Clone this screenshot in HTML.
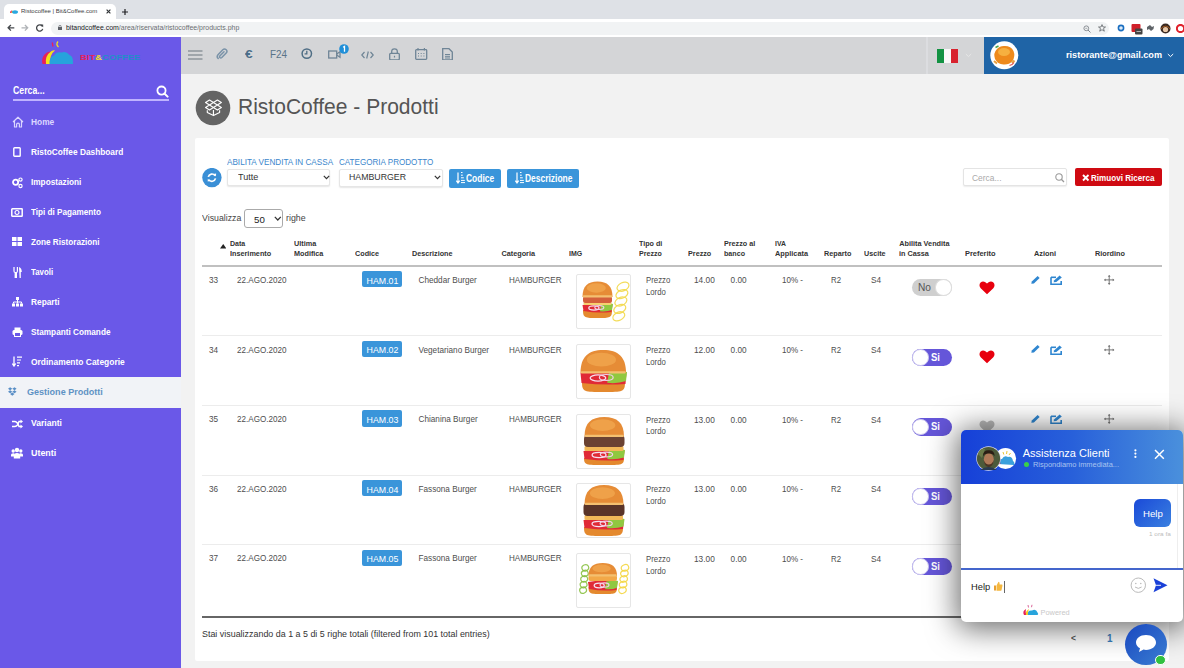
<!DOCTYPE html><html><head><meta charset='utf-8'><style>
*{margin:0;padding:0;box-sizing:border-box}
html,body{width:1184px;height:668px;overflow:hidden;background:#f2f2f2;font-family:'Liberation Sans',sans-serif}
.t{position:absolute;line-height:1;white-space:nowrap;transform-origin:0 0}
</style></head><body>
<div style="position:absolute;left:0px;top:0px;width:1184px;height:19px;background:#dee1e6"></div>
<div style="position:absolute;left:0px;top:18.6px;width:1184px;height:18px;background:#ffffff"></div>
<div style="position:absolute;left:3.5px;top:3.8px;width:112px;height:15.2px;background:#fff;border-radius:5px 5px 0 0"></div>
<svg style="position:absolute;left:8.5px;top:9px;" width="9" height="5" viewBox="0 0 9 5"><path d="M1 4 Q1 1 3 1.5 L3 4Z" fill="#e8306a"/><path d="M2.2 4 Q2.5 1.2 4 1.5 L4 4Z" fill="#f0d030"/><ellipse cx="6" cy="3" rx="3" ry="1.8" fill="#29a8e0"/></svg>
<div class="t" style="left:20.50px;top:8.35px;font-size:6.2px;color:#3c4043;font-weight:normal;font-family:'Liberation Sans', sans-serif;transform:scaleX(0.9687);">Ristocoffee | Bit&amp;Coffee.com</div>
<svg style="position:absolute;left:105.5px;top:9px;" width="5" height="5" viewBox="0 0 5 5"><path d="M0.6 0.6L4.4 4.4M4.4 0.6L0.6 4.4" stroke="#303336" stroke-width="1.15"/></svg>
<svg style="position:absolute;left:122.2px;top:8.6px;" width="6" height="6" viewBox="0 0 6 6"><path d="M3 0V6M0 3H6" stroke="#202124" stroke-width="1.2"/></svg>
<svg style="position:absolute;left:6.5px;top:24.3px;" width="8" height="8" viewBox="0 0 8 8"><path d="M7.3 3.8H1.2M3.9 1L1.1 3.8L3.9 6.6" stroke="#45484c" stroke-width="1.3" fill="none"/></svg>
<svg style="position:absolute;left:21.3px;top:24.3px;" width="8" height="8" viewBox="0 0 8 8"><path d="M0.5 3.8H6.6M3.9 1L6.7 3.8L3.9 6.6" stroke="#b0b3b7" stroke-width="1.3" fill="none"/></svg>
<svg style="position:absolute;left:36.3px;top:24.2px;" width="8" height="8" viewBox="0 0 8 8"><path d="M6.4 2.5A3.1 3.1 0 1 0 6.7 4.8" stroke="#45484c" stroke-width="1.3" fill="none"/><path d="M4.3 0.4L7.2 0.4L7.2 3.3Z" fill="#45484c"/></svg>
<div style="position:absolute;left:51px;top:21.8px;width:1058px;height:13px;background:#f1f3f4;border-radius:7px"></div>
<svg style="position:absolute;left:57.5px;top:25.2px;" width="4" height="5" viewBox="0 0 4 5"><rect x="0" y="2" width="4" height="3" fill="#5f6368"/><path d="M0.9 2.2V1.4A1.1 1.1 0 0 1 3.1 1.4V2.2" stroke="#5f6368" stroke-width="0.7" fill="none"/></svg>
<div class="t" style="left:65.90px;top:24.47px;font-size:7px;color:#6b6e72;font-weight:normal;font-family:'Liberation Sans', sans-serif;transform:scaleX(0.9933);"><span style="color:#202124">bitandcoffee.com</span>/area/riservata/ristocoffee/products.php</div>
<svg style="position:absolute;left:1082.5px;top:24.5px;" width="8" height="8" viewBox="0 0 8 8"><circle cx="3.3" cy="3.3" r="2.4" stroke="#80868b" stroke-width="0.9" fill="none"/><path d="M5 5L7.5 7.5" stroke="#80868b" stroke-width="1"/><path d="M2.3 3.3H4.3" stroke="#80868b" stroke-width="0.7"/></svg>
<svg style="position:absolute;left:1097.5px;top:24px;" width="8" height="8" viewBox="0 0 8 8"><path d="M4 0.6L5 3H7.5L5.5 4.6L6.3 7.2L4 5.7L1.7 7.2L2.5 4.6L0.5 3H3Z" stroke="#5f6368" stroke-width="0.8" fill="none"/></svg>
<svg style="position:absolute;left:1116.5px;top:24px;" width="8" height="8" viewBox="0 0 8 8"><circle cx="4" cy="4" r="3.4" fill="#1a6ec0"/><circle cx="4" cy="4" r="1.8" fill="#dfeaf5"/></svg>
<svg style="position:absolute;left:1130.5px;top:23px;" width="12" height="12" viewBox="0 0 12 12"><rect x="0.5" y="1" width="9" height="8" rx="1" fill="#d0202a"/><rect x="4" y="5.5" width="7.5" height="6" rx="1" fill="#444"/><path d="M5.5 8.5H10" stroke="#ccc" stroke-width="0.8"/></svg>
<svg style="position:absolute;left:1145.5px;top:24px;" width="9" height="8" viewBox="0 0 9 8"><path d="M1 3L4 1L6 3L8 2L7.5 5L5 7L3 5L1 6Z" fill="#5f6368"/></svg>
<svg style="position:absolute;left:1159.5px;top:23px;" width="11" height="11" viewBox="0 0 11 11"><circle cx="5.5" cy="5.5" r="5" fill="#3a2a22"/><circle cx="5.5" cy="6.5" r="2.6" fill="#e8c8a8"/><path d="M1 6A5 5 0 0 1 10 6" stroke="#e87a20" stroke-width="0.6" fill="none"/></svg>
<svg style="position:absolute;left:1175.5px;top:24px;" width="9" height="9" viewBox="0 0 9 9"><circle cx="4.5" cy="4.5" r="3.6" stroke="#e0202a" stroke-width="2" fill="none"/></svg>
<div style="position:absolute;left:0px;top:36.5px;width:181px;height:632px;background:#6a58e8"></div>
<svg style="position:absolute;left:41px;top:40px;" width="34" height="25" viewBox="0 0 34 25"><path d="M1.5 24Q-0.5 17 6 12.5Q9 11 10 11.5Q4.5 15 5.5 24Z" fill="#e8205a"/><path d="M5 24Q3.5 16 10.5 11Q13 10 14 10.5Q8.5 14.5 9 24Z" fill="#f3e31a"/><path d="M8.5 24Q8 17 13 15.5Q15.5 11 20.5 12.5Q25 10.5 28.5 15Q32.5 16 32 24Z" fill="#26a3dc"/><path d="M11.2 2.5L12 6.5" stroke="#e8205a" stroke-width="1.3"/><path d="M17 1.5Q14.5 4.5 17.5 7" stroke="#f3e31a" stroke-width="1.3" fill="none"/></svg>
<div class="t" style="left:79.60px;top:54.23px;font-size:8px;color:#fff;font-weight:bold;font-family:'Liberation Sans', sans-serif;transform:scaleX(1.1814);"><span style="color:#e8205a">BIT</span><span style="color:#f5e020">&amp;</span><span style="color:#1f8fc8">COFFEE</span></div>
<div class="t" style="left:12.50px;top:85.41px;font-size:10.5px;color:#fff;font-weight:bold;font-family:'Liberation Sans', sans-serif;transform:scaleX(0.8326);">Cerca...</div>
<svg style="position:absolute;left:155.5px;top:84.5px;" width="13" height="13" viewBox="0 0 13 13"><circle cx="5.5" cy="5.6" r="4.1" stroke="#fff" stroke-width="1.8" fill="none"/><path d="M8.4 8.5L11.6 11.6" stroke="#fff" stroke-width="2" stroke-linecap="round"/></svg>
<div style="position:absolute;left:12.5px;top:99.2px;width:156px;height:1.6px;background:#bfb3ff"></div>
<div class="t" style="left:31.40px;top:117.19px;font-size:9.7px;color:#dcd6ff;font-weight:bold;font-family:'Liberation Sans', sans-serif;transform:scaleX(0.8618);">Home</div>
<div class="t" style="left:31.40px;top:147.19px;font-size:9.7px;color:#fff;font-weight:bold;font-family:'Liberation Sans', sans-serif;transform:scaleX(0.8574);">RistoCoffee Dashboard</div>
<div class="t" style="left:31.40px;top:177.09px;font-size:9.7px;color:#fff;font-weight:bold;font-family:'Liberation Sans', sans-serif;transform:scaleX(0.8494);">Impostazioni</div>
<div class="t" style="left:31.40px;top:207.09px;font-size:9.7px;color:#fff;font-weight:bold;font-family:'Liberation Sans', sans-serif;transform:scaleX(0.8407);">Tipi di Pagamento</div>
<div class="t" style="left:31.40px;top:236.99px;font-size:9.7px;color:#fff;font-weight:bold;font-family:'Liberation Sans', sans-serif;transform:scaleX(0.8440);">Zone Ristorazioni</div>
<div class="t" style="left:31.40px;top:266.89px;font-size:9.7px;color:#fff;font-weight:bold;font-family:'Liberation Sans', sans-serif;transform:scaleX(0.8101);">Tavoli</div>
<div class="t" style="left:31.40px;top:296.99px;font-size:9.7px;color:#fff;font-weight:bold;font-family:'Liberation Sans', sans-serif;transform:scaleX(0.8595);">Reparti</div>
<div class="t" style="left:31.40px;top:327.09px;font-size:9.7px;color:#fff;font-weight:bold;font-family:'Liberation Sans', sans-serif;transform:scaleX(0.8487);">Stampanti Comande</div>
<div class="t" style="left:31.40px;top:357.09px;font-size:9.7px;color:#fff;font-weight:bold;font-family:'Liberation Sans', sans-serif;transform:scaleX(0.8704);">Ordinamento Categorie</div>
<div class="t" style="left:31.40px;top:417.99px;font-size:9.7px;color:#fff;font-weight:bold;font-family:'Liberation Sans', sans-serif;transform:scaleX(0.8857);">Varianti</div>
<div class="t" style="left:31.40px;top:447.89px;font-size:9.7px;color:#fff;font-weight:bold;font-family:'Liberation Sans', sans-serif;transform:scaleX(0.9179);">Utenti</div>
<div style="position:absolute;left:0px;top:376.6px;width:181px;height:31.3px;background:#f1f3f7"></div>
<div class="t" style="left:26.60px;top:387.42px;font-size:9.9px;color:#5e92c4;font-weight:bold;font-family:'Liberation Sans', sans-serif;transform:scaleX(0.9150);">Gestione Prodotti</div>
<svg style="position:absolute;left:12px;top:116px;" width="12" height="12" viewBox="0 0 12 12"><path d="M1 6L6 1.2L11 6M2.5 4.8V11H4.6V8.6Q4.6 7.2 6 7.2Q7.4 7.2 7.4 8.6V11H9.5V4.8" stroke="#dcd6ff" stroke-width="1.2" fill="none" stroke-linejoin="round"/></svg>
<svg style="position:absolute;left:13px;top:147px;" width="8" height="10" viewBox="0 0 8 10"><rect x="0.8" y="0.8" width="6.4" height="8.4" rx="0.8" stroke="#fff" stroke-width="1.4" fill="none"/></svg>
<svg style="position:absolute;left:11.5px;top:176.5px;" width="11" height="12" viewBox="0 0 11 12"><circle cx="3.6" cy="5.2" r="2.6" stroke="#fff" stroke-width="1.8" fill="none"/><circle cx="8.5" cy="2.6" r="1.6" stroke="#fff" stroke-width="1.2" fill="none"/><circle cx="8.5" cy="9" r="1.6" stroke="#fff" stroke-width="1.2" fill="none"/></svg>
<svg style="position:absolute;left:11px;top:207.5px;" width="12" height="9" viewBox="0 0 12 9"><rect x="0.8" y="0.8" width="10.4" height="7.4" rx="0.5" stroke="#fff" stroke-width="1.5" fill="none"/><circle cx="6" cy="4.5" r="2" stroke="#fff" stroke-width="1.2" fill="none"/></svg>
<svg style="position:absolute;left:12px;top:237px;" width="10" height="9" viewBox="0 0 10 9"><rect x="0" y="0" width="4.5" height="4" fill="#fff"/><rect x="5.5" y="0" width="4.5" height="4" fill="#fff"/><rect x="0" y="5" width="4.5" height="4" fill="#fff"/><rect x="5.5" y="5" width="4.5" height="4" fill="#fff"/></svg>
<svg style="position:absolute;left:12.5px;top:266.5px;" width="9" height="11" viewBox="0 0 9 11"><path d="M1 0V4Q1 5.5 2.2 5.5V11H3.4V5.5Q4.4 5.5 4.4 4V0" stroke="#fff" stroke-width="1.2" fill="none"/><path d="M6 0Q8.8 1 8.8 5H7.8V11H6.6Z" fill="#fff"/></svg>
<svg style="position:absolute;left:11.5px;top:297px;" width="11" height="10" viewBox="0 0 11 10"><rect x="4" y="0" width="3" height="3" fill="#fff"/><path d="M5.5 3V5M1.5 5H9.5M1.5 5V6.5M9.5 5V6.5M5.5 5V6.5" stroke="#fff" stroke-width="1"/><rect x="0" y="6.5" width="3" height="3" fill="#fff"/><rect x="4" y="6.5" width="3" height="3" fill="#fff"/><rect x="8" y="6.5" width="3" height="3" fill="#fff"/></svg>
<svg style="position:absolute;left:11.5px;top:327px;" width="11" height="10" viewBox="0 0 11 10"><rect x="2.5" y="0.5" width="6" height="3" fill="#fff"/><rect x="0.5" y="3" width="10" height="5" rx="1.5" fill="#fff"/><rect x="2.5" y="5.5" width="6" height="4" fill="#6a58e8" stroke="#fff" stroke-width="1"/></svg>
<svg style="position:absolute;left:12px;top:356px;" width="10" height="11" viewBox="0 0 10 11"><path d="M2 0.5V9M0.3 7.5L2 10L3.7 7.5" stroke="#fff" stroke-width="1.3" fill="none"/><path d="M5 1.2H10M5 4H9M5 6.8H8M5 9.6H7" stroke="#fff" stroke-width="1.2"/></svg>
<svg style="position:absolute;left:7.6px;top:387.3px;" width="9" height="9" viewBox="0 0 9 9"><path d="M2.1 0.3L4.3 1.7L2.1 3.3L0 1.8ZM6.5 0.3L8.6 1.8L6.5 3.3L4.3 1.7ZM0 4.8L2.1 3.3L4.3 4.8L2.1 6.3ZM8.6 4.8L6.5 3.3L4.3 4.8L6.5 6.3ZM2.1 6.9L4.3 5.4L6.5 6.9L4.3 8.7Z" fill="#5a8fc6"/></svg>
<svg style="position:absolute;left:11.5px;top:418.5px;" width="11" height="10" viewBox="0 0 11 10"><path d="M0 2.5H2.5Q5.5 2.5 7 7.5H9M0 7.5H2.5Q5.5 7.5 7 2.5H9" stroke="#fff" stroke-width="1.4" fill="none"/><path d="M8.5 0.5L11 2.5L8.5 4.5ZM8.5 5.5L11 7.5L8.5 9.5Z" fill="#fff"/></svg>
<svg style="position:absolute;left:11px;top:447px;" width="12" height="12" viewBox="0 0 12 12"><circle cx="6" cy="3" r="2.2" fill="#fff"/><circle cx="2.2" cy="4" r="1.7" fill="#fff"/><circle cx="9.8" cy="4" r="1.7" fill="#fff"/><path d="M2.8 11.5V8.5Q2.8 6 6 6Q9.2 6 9.2 8.5V11.5Z" fill="#fff"/><path d="M0 9.5V7.7Q0 6.2 2.2 6.2Q3 6.2 3.5 6.5V9.5ZM12 9.5V7.7Q12 6.2 9.8 6.2Q9 6.2 8.5 6.5V9.5Z" fill="#fff"/></svg>
<div style="position:absolute;left:181px;top:36.5px;width:1003px;height:37px;background:#d4d5d7"></div>
<div style="position:absolute;left:925.5px;top:36.5px;width:2px;height:37px;background:#dcdde0"></div>
<div style="position:absolute;left:984px;top:36.5px;width:200px;height:37px;background:#1f64a6"></div>
<svg style="position:absolute;left:187.5px;top:50px;" width="15" height="10" viewBox="0 0 15 10"><path d="M0 1H14.5M0 5H14.5M0 9H14.5" stroke="#8d959c" stroke-width="1.3"/></svg>
<svg style="position:absolute;left:216px;top:48px;" width="13" height="12" viewBox="0 0 13 12"><path d="M2.2 10.5Q0.3 8.8 2 6.8L6.8 1.8Q8.5 0.3 10.2 1.8Q11.7 3.4 10.2 5L5.8 9.5Q4.8 10.4 3.9 9.5Q3.1 8.6 4 7.7L8 3.7" stroke="#7a93a8" stroke-width="1.5" fill="none" stroke-linecap="round"/></svg>
<div class="t" style="left:245.20px;top:48.99px;font-size:11px;color:#4a6d88;font-weight:bold;font-family:'Liberation Sans', sans-serif;transform:scaleX(1.2408);">€</div>
<div class="t" style="left:269.50px;top:49.83px;font-size:10px;color:#5a7488;font-weight:normal;font-family:'Liberation Sans', sans-serif;transform:scaleX(0.9922);">F24</div>
<svg style="position:absolute;left:301px;top:48px;" width="12" height="12" viewBox="0 0 12 12"><circle cx="5.8" cy="5.6" r="4.7" stroke="#4f6e85" stroke-width="1.5" fill="none"/><path d="M5.8 2.8V5.9H3.6" stroke="#4f6e85" stroke-width="1.3" fill="none"/></svg>
<svg style="position:absolute;left:327.5px;top:49.5px;" width="13" height="9" viewBox="0 0 13 9"><rect x="0.7" y="1" width="8" height="7" stroke="#6f8596" stroke-width="1.3" fill="none"/><path d="M8.7 4L12 1.8V7.2L8.7 5" stroke="#6f8596" stroke-width="1.3" fill="none"/></svg>
<svg style="position:absolute;left:338.5px;top:44.2px;" width="10" height="10" viewBox="0 0 10 10"><circle cx="5" cy="5" r="4.8" fill="#1f8fd8"/><path d="M4.1 3.2L5.5 2.4V7.8" stroke="#fff" stroke-width="1.3" fill="none"/></svg>
<svg style="position:absolute;left:361px;top:50.5px;" width="13" height="8" viewBox="0 0 13 8"><path d="M3.5 1L0.8 4L3.5 7M9.5 1L12.2 4L9.5 7M7.3 0.5L5.7 7.5" stroke="#6f8596" stroke-width="1.2" fill="none"/></svg>
<svg style="position:absolute;left:389px;top:47.8px;" width="11" height="12.5" viewBox="0 0 11 12.5"><rect x="0.7" y="5.3" width="9.6" height="6.5" rx="1" stroke="#6f8596" stroke-width="1.3" fill="none"/><path d="M2.7 5.3V3.5Q2.7 0.8 5.5 0.8Q8.3 0.8 8.3 3.5V5.3" stroke="#6f8596" stroke-width="1.3" fill="none"/><path d="M5.5 7.8V9.5" stroke="#6f8596" stroke-width="1.2"/></svg>
<svg style="position:absolute;left:415px;top:48.3px;" width="12.5" height="12" viewBox="0 0 12.5 12"><rect x="0.7" y="1.7" width="11" height="9.6" rx="0.8" stroke="#6f8596" stroke-width="1.3" fill="none"/><path d="M3 0V2.5M9.4 0V2.5" stroke="#6f8596" stroke-width="1.2"/><path d="M3 5.5H4M5.7 5.5H6.7M8.4 5.5H9.4M3 8H4M5.7 8H6.7M8.4 8H9.4" stroke="#6f8596" stroke-width="1.1"/></svg>
<svg style="position:absolute;left:441.5px;top:47.8px;" width="11" height="12.5" viewBox="0 0 11 12.5"><path d="M0.7 0.7H7L10.3 4V11.8H0.7Z" stroke="#6f8596" stroke-width="1.3" fill="none"/><path d="M3 6.5H8M3 8.3H8M3 10H8" stroke="#6f8596" stroke-width="1"/></svg>
<div style="position:absolute;left:937px;top:48.6px;width:7.3px;height:14px;background:#129242"></div>
<div style="position:absolute;left:944.3px;top:48.6px;width:7px;height:14px;background:#f8f8f8"></div>
<div style="position:absolute;left:951.3px;top:48.6px;width:7px;height:14px;background:#d8222e"></div>
<svg style="position:absolute;left:965px;top:53px;" width="7" height="5" viewBox="0 0 7 5"><path d="M0.8 1L3.5 3.6L6.2 1" stroke="#e6e6e6" stroke-width="1" fill="none"/></svg>
<svg style="position:absolute;left:989.5px;top:41px;" width="29" height="29" viewBox="0 0 29 29"><circle cx="14.3" cy="14.3" r="14" fill="#fff"/><path d="M5 18Q3 12 7 8Q10 4.5 15 5Q21 5 23.5 10Q25.5 15 22.5 20Q19 24 13.5 23.5Q7.5 23 5 18Z" fill="#ee8a1c"/><ellipse cx="14" cy="11" rx="6" ry="4" fill="#f6b040"/><path d="M4 20L7 22.5M22 22L24.5 19.5" stroke="#e8a040" stroke-width="2"/><path d="M5.5 6.5L8.5 5" stroke="#48a048" stroke-width="1.4"/><path d="M19.5 24.5Q22.5 24 24 21.5" stroke="#e05050" stroke-width="1.1" fill="none"/></svg>
<div class="t" style="left:1066.00px;top:50.00px;font-size:9.8px;color:#fff;font-weight:bold;font-family:'Liberation Sans', sans-serif;transform:scaleX(0.9302);">ristorante@gmail.com</div>
<svg style="position:absolute;left:1166.5px;top:52.5px;" width="7" height="5" viewBox="0 0 7 5"><path d="M0.8 1L3.5 3.6L6.2 1" stroke="#fff" stroke-width="1" fill="none"/></svg>
<svg style="position:absolute;left:194.5px;top:90.3px;" width="36" height="36" viewBox="0 0 36 36"><circle cx="18" cy="18" r="17.3" fill="#646464"/><g stroke="#fff" stroke-width="1.15" fill="none" stroke-linejoin="round"><path d="M10.55 12.60L14.50 10.10L18.45 12.60L14.50 15.10ZM18.45 12.60L22.40 10.10L26.35 12.60L22.40 15.10ZM10.55 17.60L14.50 15.10L18.45 17.60L14.50 20.10ZM18.45 17.60L22.40 15.10L26.35 17.60L22.40 20.10Z"/><path d="M12.3 20.3V22.6L18.45 25.6L24.6 22.6V20.3M18.45 20.1V25.6"/></g></svg>
<div class="t" style="left:237.80px;top:96.80px;font-size:21.5px;color:#555;font-weight:normal;font-family:'Liberation Sans', sans-serif;transform:scaleX(0.9778);">RistoCoffee - Prodotti</div>
<div style="position:absolute;left:194.5px;top:138.2px;width:974.7px;height:523.3px;background:#fff;border-radius:2px"></div>
<svg style="position:absolute;left:202px;top:167.5px;" width="20" height="20" viewBox="0 0 20 20"><circle cx="9.9" cy="9.6" r="9.7" fill="#3a8fd6"/><path d="M6.3 8.9A3.7 3.7 0 0 1 13 7.7M13.5 10.4A3.7 3.7 0 0 1 6.8 11.6" stroke="#fff" stroke-width="1.7" fill="none"/><path d="M11.6 6.1L14.1 5.6L14 8.5ZM8.2 13.1L5.7 13.6L5.8 10.7Z" fill="#fff"/></svg>
<div class="t" style="left:227.10px;top:157.87px;font-size:8.3px;color:#3a86cc;font-weight:normal;font-family:'Liberation Sans', sans-serif;transform:scaleX(0.9820);">ABILITA VENDITA IN CASSA</div>
<div class="t" style="left:338.80px;top:157.87px;font-size:8.3px;color:#3a86cc;font-weight:normal;font-family:'Liberation Sans', sans-serif;transform:scaleX(0.9735);">CATEGORIA PRODOTTO</div>
<div style="position:absolute;left:227.4px;top:168.9px;width:103.1px;height:17.6px;background:#fff;border:1px solid #e6e6e6;border-radius:2px;box-shadow:0 1px 1.5px rgba(0,0,0,0.10)"></div>
<div class="t" style="left:238.00px;top:172.73px;font-size:9.3px;color:#333;font-weight:normal;font-family:'Liberation Sans', sans-serif;transform:scaleX(0.9739);">Tutte</div>
<svg style="position:absolute;left:322.5px;top:175px;" width="7" height="5" viewBox="0 0 7 5"><path d="M0.8 0.8L3.5 3.6L6.2 0.8" stroke="#333" stroke-width="1.2" fill="none"/></svg>
<div style="position:absolute;left:339.2px;top:168.6px;width:103.5px;height:18.4px;background:#fff;border:1px solid #e6e6e6;border-radius:2px;box-shadow:0 1px 1.5px rgba(0,0,0,0.10)"></div>
<div class="t" style="left:349.40px;top:172.73px;font-size:9.3px;color:#333;font-weight:normal;font-family:'Liberation Sans', sans-serif;transform:scaleX(0.9431);">HAMBURGER</div>
<svg style="position:absolute;left:434px;top:175px;" width="7" height="5" viewBox="0 0 7 5"><path d="M0.8 0.8L3.5 3.6L6.2 0.8" stroke="#333" stroke-width="1.2" fill="none"/></svg>
<div style="position:absolute;left:448.6px;top:169px;width:52.8px;height:19px;background:#3a95da;border-radius:2px"></div>
<div style="position:absolute;left:507.1px;top:169px;width:71.8px;height:19px;background:#3a95da;border-radius:2px"></div>
<svg style="position:absolute;left:455.5px;top:172.3px;" width="9" height="12" viewBox="0 0 9 12"><path d="M2 0.5V10.5M0.3 8.7L2 11L3.7 8.7" stroke="#fff" stroke-width="1.2" fill="none"/><path d="M5 3.2H6.8M5 5.8H7.8M5 8.4H8.8M5 10.6H9" stroke="#fff" stroke-width="1"/><path d="M5 0.5H6.5" stroke="#fff" stroke-width="1"/></svg>
<svg style="position:absolute;left:514.5px;top:172.3px;" width="9" height="12" viewBox="0 0 9 12"><path d="M2 0.5V10.5M0.3 8.7L2 11L3.7 8.7" stroke="#fff" stroke-width="1.2" fill="none"/><path d="M5 3.2H6.8M5 5.8H7.8M5 8.4H8.8M5 10.6H9" stroke="#fff" stroke-width="1"/><path d="M5 0.5H6.5" stroke="#fff" stroke-width="1"/></svg>
<div class="t" style="left:466.30px;top:173.73px;font-size:10px;color:#fff;font-weight:bold;font-family:'Liberation Sans', sans-serif;transform:scaleX(0.8427);">Codice</div>
<div class="t" style="left:525.00px;top:173.73px;font-size:10px;color:#fff;font-weight:bold;font-family:'Liberation Sans', sans-serif;transform:scaleX(0.8461);">Descrizione</div>
<div style="position:absolute;left:963.2px;top:168.2px;width:103.5px;height:18.1px;background:#fff;border:1px solid #e4e4e4;border-radius:2px;box-shadow:0 1px 1.5px rgba(0,0,0,0.08)"></div>
<div class="t" style="left:972.30px;top:172.96px;font-size:9.5px;color:#aaa;font-weight:normal;font-family:'Liberation Sans', sans-serif;transform:scaleX(0.8868);">Cerca...</div>
<svg style="position:absolute;left:1054.5px;top:173px;" width="10" height="10" viewBox="0 0 10 10"><circle cx="4" cy="4" r="3.2" stroke="#999" stroke-width="1.1" fill="none"/><path d="M6.3 6.3L9 9" stroke="#999" stroke-width="1.3"/></svg>
<div style="position:absolute;left:1074.8px;top:168.2px;width:87.2px;height:18.1px;background:#cf0a12;border-radius:2px"></div>
<svg style="position:absolute;left:1082px;top:174px;" width="7.5" height="7.5" viewBox="0 0 7.5 7.5"><path d="M1 1L6.5 6.5M6.5 1L1 6.5" stroke="#fff" stroke-width="1.9"/></svg>
<div class="t" style="left:1091.20px;top:172.87px;font-size:9.6px;color:#fff;font-weight:bold;font-family:'Liberation Sans', sans-serif;transform:scaleX(0.8446);">Rimuovi Ricerca</div>
<div class="t" style="left:202.30px;top:213.58px;font-size:9px;color:#444;font-weight:normal;font-family:'Liberation Sans', sans-serif;transform:scaleX(0.9738);">Visualizza</div>
<div style="position:absolute;left:243.8px;top:209.1px;width:39.2px;height:19px;background:#fff;border:1px solid #aaa;border-radius:3px"></div>
<div class="t" style="left:253.90px;top:214.87px;font-size:9.6px;color:#222;font-weight:normal;font-family:'Liberation Sans', sans-serif;transform:scaleX(1.0120);">50</div>
<svg style="position:absolute;left:273.8px;top:215.8px;" width="8" height="6" viewBox="0 0 8 6"><path d="M0.8 0.8L3.8 4L6.8 0.8" stroke="#333" stroke-width="1.2" fill="none"/></svg>
<div class="t" style="left:285.60px;top:213.58px;font-size:9px;color:#444;font-weight:normal;font-family:'Liberation Sans', sans-serif;transform:scaleX(0.9792);">righe</div>
<svg style="position:absolute;left:219.8px;top:243.6px;" width="6.5" height="5" viewBox="0 0 6.5 5"><path d="M3.25 0L6.5 4.6H0Z" fill="#222"/></svg>
<div class="t" style="left:229.80px;top:239.62px;font-size:7.3px;color:#333;font-weight:bold;font-family:'Liberation Sans', sans-serif;transform:scaleX(0.9603);">Data</div>
<div class="t" style="left:229.80px;top:249.62px;font-size:7.3px;color:#333;font-weight:bold;font-family:'Liberation Sans', sans-serif;transform:scaleX(0.9961);">Inserimento</div>
<div class="t" style="left:293.80px;top:239.62px;font-size:7.3px;color:#333;font-weight:bold;font-family:'Liberation Sans', sans-serif;transform:scaleX(0.9950);">Ultima</div>
<div class="t" style="left:293.80px;top:249.62px;font-size:7.3px;color:#333;font-weight:bold;font-family:'Liberation Sans', sans-serif;transform:scaleX(0.9935);">Modifica</div>
<div class="t" style="left:355.20px;top:249.62px;font-size:7.3px;color:#333;font-weight:bold;font-family:'Liberation Sans', sans-serif;transform:scaleX(0.9906);">Codice</div>
<div class="t" style="left:411.70px;top:249.62px;font-size:7.3px;color:#333;font-weight:bold;font-family:'Liberation Sans', sans-serif;transform:scaleX(0.9886);">Descrizione</div>
<div class="t" style="left:501.40px;top:249.62px;font-size:7.3px;color:#333;font-weight:bold;font-family:'Liberation Sans', sans-serif;">Categoria</div>
<div class="t" style="left:568.80px;top:249.62px;font-size:7.3px;color:#333;font-weight:bold;font-family:'Liberation Sans', sans-serif;transform:scaleX(0.9567);">IMG</div>
<div class="t" style="left:638.90px;top:239.52px;font-size:7.3px;color:#333;font-weight:bold;font-family:'Liberation Sans', sans-serif;transform:scaleX(0.9798);">Tipo di</div>
<div class="t" style="left:638.90px;top:249.62px;font-size:7.3px;color:#333;font-weight:bold;font-family:'Liberation Sans', sans-serif;transform:scaleX(0.9689);">Prezzo</div>
<div class="t" style="left:687.80px;top:249.62px;font-size:7.3px;color:#333;font-weight:bold;font-family:'Liberation Sans', sans-serif;transform:scaleX(0.9902);">Prezzo</div>
<div class="t" style="left:724.20px;top:239.52px;font-size:7.3px;color:#333;font-weight:bold;font-family:'Liberation Sans', sans-serif;transform:scaleX(0.9861);">Prezzo al</div>
<div class="t" style="left:724.20px;top:249.62px;font-size:7.3px;color:#333;font-weight:bold;font-family:'Liberation Sans', sans-serif;transform:scaleX(0.9767);">banco</div>
<div class="t" style="left:774.90px;top:239.52px;font-size:7.3px;color:#333;font-weight:bold;font-family:'Liberation Sans', sans-serif;transform:scaleX(0.9376);">IVA</div>
<div class="t" style="left:774.90px;top:249.62px;font-size:7.3px;color:#333;font-weight:bold;font-family:'Liberation Sans', sans-serif;transform:scaleX(1.0048);">Applicata</div>
<div class="t" style="left:823.80px;top:249.62px;font-size:7.3px;color:#333;font-weight:bold;font-family:'Liberation Sans', sans-serif;transform:scaleX(0.9935);">Reparto</div>
<div class="t" style="left:864.40px;top:249.62px;font-size:7.3px;color:#333;font-weight:bold;font-family:'Liberation Sans', sans-serif;transform:scaleX(0.9815);">Uscite</div>
<div class="t" style="left:899.30px;top:239.52px;font-size:7.3px;color:#333;font-weight:bold;font-family:'Liberation Sans', sans-serif;">Abilita Vendita</div>
<div class="t" style="left:899.30px;top:249.62px;font-size:7.3px;color:#333;font-weight:bold;font-family:'Liberation Sans', sans-serif;transform:scaleX(0.9961);">in Cassa</div>
<div class="t" style="left:964.70px;top:249.62px;font-size:7.3px;color:#333;font-weight:bold;font-family:'Liberation Sans', sans-serif;transform:scaleX(1.0195);">Preferito</div>
<div class="t" style="left:1033.80px;top:249.62px;font-size:7.3px;color:#333;font-weight:bold;font-family:'Liberation Sans', sans-serif;transform:scaleX(1.0050);">Azioni</div>
<div class="t" style="left:1094.50px;top:249.62px;font-size:7.3px;color:#333;font-weight:bold;font-family:'Liberation Sans', sans-serif;transform:scaleX(0.9967);">Riordino</div>
<div style="position:absolute;left:202px;top:265px;width:960px;height:2px;background:#c0c0c0"></div>
<div class="t" style="left:208.90px;top:276.86px;font-size:8.2px;color:#4e4e4e;font-weight:normal;font-family:'Liberation Sans', sans-serif;">33</div>
<div class="t" style="left:236.80px;top:276.86px;font-size:8.2px;color:#4e4e4e;font-weight:normal;font-family:'Liberation Sans', sans-serif;transform:scaleX(0.9905);">22.AGO.2020</div>
<div style="position:absolute;left:362.3px;top:271.0px;width:39.8px;height:16.3px;background:#3a95da;border-radius:2px"></div>
<div class="t" style="left:366.60px;top:276.75px;font-size:8.8px;color:#fff;font-weight:normal;font-family:'Liberation Sans', sans-serif;">HAM.01</div>
<div class="t" style="left:418.50px;top:276.86px;font-size:8.2px;color:#4e4e4e;font-weight:normal;font-family:'Liberation Sans', sans-serif;">Cheddar Burger</div>
<div class="t" style="left:508.50px;top:276.86px;font-size:8.2px;color:#4e4e4e;font-weight:normal;font-family:'Liberation Sans', sans-serif;transform:scaleX(0.9862);">HAMBURGER</div>
<div style="position:absolute;left:575.6px;top:274.3px;width:55.3px;height:55px;background:#fff;border:1px solid #e6e6e6;border-radius:2px"></div>
<!--IMG0:575.6,274.3-->
<div class="t" style="left:645.70px;top:277.36px;font-size:8.2px;color:#4e4e4e;font-weight:normal;font-family:'Liberation Sans', sans-serif;transform:scaleX(0.9535);">Prezzo</div>
<div class="t" style="left:645.70px;top:288.96px;font-size:8.2px;color:#4e4e4e;font-weight:normal;font-family:'Liberation Sans', sans-serif;transform:scaleX(0.9450);">Lordo</div>
<div class="t" style="left:694.10px;top:277.36px;font-size:8.2px;color:#4e4e4e;font-weight:normal;font-family:'Liberation Sans', sans-serif;transform:scaleX(1.0146);">14.00</div>
<div class="t" style="left:730.60px;top:277.36px;font-size:8.2px;color:#4e4e4e;font-weight:normal;font-family:'Liberation Sans', sans-serif;">0.00</div>
<div class="t" style="left:782.00px;top:277.36px;font-size:8.2px;color:#4e4e4e;font-weight:normal;font-family:'Liberation Sans', sans-serif;transform:scaleX(0.9817);">10% -</div>
<div class="t" style="left:831.00px;top:277.36px;font-size:8.2px;color:#4e4e4e;font-weight:normal;font-family:'Liberation Sans', sans-serif;transform:scaleX(0.9552);">R2</div>
<div class="t" style="left:870.70px;top:277.36px;font-size:8.2px;color:#4e4e4e;font-weight:normal;font-family:'Liberation Sans', sans-serif;transform:scaleX(1.0084);">S4</div>
<div style="position:absolute;left:911.9px;top:279.0px;width:40.6px;height:17px;background:#cfcfcf;border-radius:9px"></div>
<div style="position:absolute;left:935.2px;top:279.3px;width:17.2px;height:16.4px;background:#fff;border-radius:50%;border:0.6px solid #ddd"></div>
<div class="t" style="left:917.50px;top:282.94px;font-size:10px;color:#555;font-weight:normal;font-family:'Liberation Sans', sans-serif;transform:scaleX(1.0159);">No</div>
<svg style="position:absolute;left:978.5px;top:280.8px;" width="16" height="14" viewBox="0 0 16 14"><path d="M8 13.2L1.7 7.2Q-0.7 4.2 1.6 1.6Q4.5 -0.8 8 2.6Q11.5 -0.8 14.4 1.6Q16.7 4.2 14.3 7.2Z" fill="#e8000e"/></svg>
<svg style="position:absolute;left:1029.5px;top:274.59999999999997px;" width="11" height="10" viewBox="0 0 11 10"><path d="M1.3 8.7L1.8 6.6L7.6 0.9L9.6 2.9L3.9 8.6Z" fill="#2f86d0"/></svg>
<svg style="position:absolute;left:1050.2px;top:275.09999999999997px;" width="13.5" height="10.5" viewBox="0 0 13.5 10.5"><path d="M1 2.3V9.3H11.2V6" stroke="#2f86d0" stroke-width="1.6" fill="none"/><path d="M3.5 7.3L4.3 5.2L9.6 0.5L11.8 2.4L6.3 7Z" fill="#2f86d0"/><path d="M1 2.3H6" stroke="#2f86d0" stroke-width="1.6"/></svg>
<svg style="position:absolute;left:1104px;top:275.09999999999997px;" width="10.5" height="10" viewBox="0 0 10.5 10"><path d="M5.2 0.3V9.5M0.4 4.9H10" stroke="#777" stroke-width="1"/><path d="M5.2 0L3.8 1.7H6.6ZM5.2 9.8L3.8 8.1H6.6ZM0 4.9L1.7 3.5V6.3ZM10.4 4.9L8.7 3.5V6.3Z" fill="#777"/></svg>
<div style="position:absolute;left:202px;top:335.35px;width:960px;height:1px;background:#ececec"></div>
<div class="t" style="left:208.90px;top:346.51px;font-size:8.2px;color:#4e4e4e;font-weight:normal;font-family:'Liberation Sans', sans-serif;">34</div>
<div class="t" style="left:236.80px;top:346.51px;font-size:8.2px;color:#4e4e4e;font-weight:normal;font-family:'Liberation Sans', sans-serif;transform:scaleX(0.9905);">22.AGO.2020</div>
<div style="position:absolute;left:362.3px;top:340.65000000000003px;width:39.8px;height:16.3px;background:#3a95da;border-radius:2px"></div>
<div class="t" style="left:366.60px;top:346.40px;font-size:8.8px;color:#fff;font-weight:normal;font-family:'Liberation Sans', sans-serif;">HAM.02</div>
<div class="t" style="left:418.50px;top:346.51px;font-size:8.2px;color:#4e4e4e;font-weight:normal;font-family:'Liberation Sans', sans-serif;">Vegetariano Burger</div>
<div class="t" style="left:508.50px;top:346.51px;font-size:8.2px;color:#4e4e4e;font-weight:normal;font-family:'Liberation Sans', sans-serif;transform:scaleX(0.9862);">HAMBURGER</div>
<div style="position:absolute;left:575.6px;top:343.95000000000005px;width:55.3px;height:55px;background:#fff;border:1px solid #e6e6e6;border-radius:2px"></div>
<!--IMG1:575.6,343.95000000000005-->
<div class="t" style="left:645.70px;top:347.01px;font-size:8.2px;color:#4e4e4e;font-weight:normal;font-family:'Liberation Sans', sans-serif;transform:scaleX(0.9535);">Prezzo</div>
<div class="t" style="left:645.70px;top:358.61px;font-size:8.2px;color:#4e4e4e;font-weight:normal;font-family:'Liberation Sans', sans-serif;transform:scaleX(0.9450);">Lordo</div>
<div class="t" style="left:694.10px;top:347.01px;font-size:8.2px;color:#4e4e4e;font-weight:normal;font-family:'Liberation Sans', sans-serif;transform:scaleX(1.0146);">12.00</div>
<div class="t" style="left:730.60px;top:347.01px;font-size:8.2px;color:#4e4e4e;font-weight:normal;font-family:'Liberation Sans', sans-serif;">0.00</div>
<div class="t" style="left:782.00px;top:347.01px;font-size:8.2px;color:#4e4e4e;font-weight:normal;font-family:'Liberation Sans', sans-serif;transform:scaleX(0.9817);">10% -</div>
<div class="t" style="left:831.00px;top:347.01px;font-size:8.2px;color:#4e4e4e;font-weight:normal;font-family:'Liberation Sans', sans-serif;transform:scaleX(0.9552);">R2</div>
<div class="t" style="left:870.70px;top:347.01px;font-size:8.2px;color:#4e4e4e;font-weight:normal;font-family:'Liberation Sans', sans-serif;transform:scaleX(1.0084);">S4</div>
<div style="position:absolute;left:911.9px;top:348.65000000000003px;width:40.3px;height:17.5px;background:#6556d9;border-radius:9px"></div>
<div style="position:absolute;left:912.3px;top:349.05px;width:16.6px;height:16.6px;background:#fff;border-radius:50%;border:0.6px solid #c9c3ef"></div>
<div class="t" style="left:931.10px;top:352.79px;font-size:10px;color:#fff;font-weight:bold;font-family:'Liberation Sans', sans-serif;transform:scaleX(0.9521);">Si</div>
<svg style="position:absolute;left:978.5px;top:350.45000000000005px;" width="16" height="14" viewBox="0 0 16 14"><path d="M8 13.2L1.7 7.2Q-0.7 4.2 1.6 1.6Q4.5 -0.8 8 2.6Q11.5 -0.8 14.4 1.6Q16.7 4.2 14.3 7.2Z" fill="#e8000e"/></svg>
<svg style="position:absolute;left:1029.5px;top:344.25px;" width="11" height="10" viewBox="0 0 11 10"><path d="M1.3 8.7L1.8 6.6L7.6 0.9L9.6 2.9L3.9 8.6Z" fill="#2f86d0"/></svg>
<svg style="position:absolute;left:1050.2px;top:344.75px;" width="13.5" height="10.5" viewBox="0 0 13.5 10.5"><path d="M1 2.3V9.3H11.2V6" stroke="#2f86d0" stroke-width="1.6" fill="none"/><path d="M3.5 7.3L4.3 5.2L9.6 0.5L11.8 2.4L6.3 7Z" fill="#2f86d0"/><path d="M1 2.3H6" stroke="#2f86d0" stroke-width="1.6"/></svg>
<svg style="position:absolute;left:1104px;top:344.75px;" width="10.5" height="10" viewBox="0 0 10.5 10"><path d="M5.2 0.3V9.5M0.4 4.9H10" stroke="#777" stroke-width="1"/><path d="M5.2 0L3.8 1.7H6.6ZM5.2 9.8L3.8 8.1H6.6ZM0 4.9L1.7 3.5V6.3ZM10.4 4.9L8.7 3.5V6.3Z" fill="#777"/></svg>
<div style="position:absolute;left:202px;top:405.0px;width:960px;height:1px;background:#ececec"></div>
<div class="t" style="left:208.90px;top:416.16px;font-size:8.2px;color:#4e4e4e;font-weight:normal;font-family:'Liberation Sans', sans-serif;">35</div>
<div class="t" style="left:236.80px;top:416.16px;font-size:8.2px;color:#4e4e4e;font-weight:normal;font-family:'Liberation Sans', sans-serif;transform:scaleX(0.9905);">22.AGO.2020</div>
<div style="position:absolute;left:362.3px;top:410.3px;width:39.8px;height:16.3px;background:#3a95da;border-radius:2px"></div>
<div class="t" style="left:366.60px;top:416.05px;font-size:8.8px;color:#fff;font-weight:normal;font-family:'Liberation Sans', sans-serif;">HAM.03</div>
<div class="t" style="left:418.50px;top:416.16px;font-size:8.2px;color:#4e4e4e;font-weight:normal;font-family:'Liberation Sans', sans-serif;">Chianina Burger</div>
<div class="t" style="left:508.50px;top:416.16px;font-size:8.2px;color:#4e4e4e;font-weight:normal;font-family:'Liberation Sans', sans-serif;transform:scaleX(0.9862);">HAMBURGER</div>
<div style="position:absolute;left:575.6px;top:413.6px;width:55.3px;height:55px;background:#fff;border:1px solid #e6e6e6;border-radius:2px"></div>
<!--IMG2:575.6,413.6-->
<div class="t" style="left:645.70px;top:416.66px;font-size:8.2px;color:#4e4e4e;font-weight:normal;font-family:'Liberation Sans', sans-serif;transform:scaleX(0.9535);">Prezzo</div>
<div class="t" style="left:645.70px;top:428.26px;font-size:8.2px;color:#4e4e4e;font-weight:normal;font-family:'Liberation Sans', sans-serif;transform:scaleX(0.9450);">Lordo</div>
<div class="t" style="left:694.10px;top:416.66px;font-size:8.2px;color:#4e4e4e;font-weight:normal;font-family:'Liberation Sans', sans-serif;transform:scaleX(1.0146);">13.00</div>
<div class="t" style="left:730.60px;top:416.66px;font-size:8.2px;color:#4e4e4e;font-weight:normal;font-family:'Liberation Sans', sans-serif;">0.00</div>
<div class="t" style="left:782.00px;top:416.66px;font-size:8.2px;color:#4e4e4e;font-weight:normal;font-family:'Liberation Sans', sans-serif;transform:scaleX(0.9817);">10% -</div>
<div class="t" style="left:831.00px;top:416.66px;font-size:8.2px;color:#4e4e4e;font-weight:normal;font-family:'Liberation Sans', sans-serif;transform:scaleX(0.9552);">R2</div>
<div class="t" style="left:870.70px;top:416.66px;font-size:8.2px;color:#4e4e4e;font-weight:normal;font-family:'Liberation Sans', sans-serif;transform:scaleX(1.0084);">S4</div>
<div style="position:absolute;left:911.9px;top:418.3px;width:40.3px;height:17.5px;background:#6556d9;border-radius:9px"></div>
<div style="position:absolute;left:912.3px;top:418.7px;width:16.6px;height:16.6px;background:#fff;border-radius:50%;border:0.6px solid #c9c3ef"></div>
<div class="t" style="left:931.10px;top:422.44px;font-size:10px;color:#fff;font-weight:bold;font-family:'Liberation Sans', sans-serif;transform:scaleX(0.9521);">Si</div>
<svg style="position:absolute;left:978.5px;top:420.1px;" width="16" height="14" viewBox="0 0 16 14"><path d="M8 13.2L1.7 7.2Q-0.7 4.2 1.6 1.6Q4.5 -0.8 8 2.6Q11.5 -0.8 14.4 1.6Q16.7 4.2 14.3 7.2Z" fill="#bbbbbb"/></svg>
<svg style="position:absolute;left:1029.5px;top:413.9px;" width="11" height="10" viewBox="0 0 11 10"><path d="M1.3 8.7L1.8 6.6L7.6 0.9L9.6 2.9L3.9 8.6Z" fill="#2f86d0"/></svg>
<svg style="position:absolute;left:1050.2px;top:414.4px;" width="13.5" height="10.5" viewBox="0 0 13.5 10.5"><path d="M1 2.3V9.3H11.2V6" stroke="#2f86d0" stroke-width="1.6" fill="none"/><path d="M3.5 7.3L4.3 5.2L9.6 0.5L11.8 2.4L6.3 7Z" fill="#2f86d0"/><path d="M1 2.3H6" stroke="#2f86d0" stroke-width="1.6"/></svg>
<svg style="position:absolute;left:1104px;top:414.4px;" width="10.5" height="10" viewBox="0 0 10.5 10"><path d="M5.2 0.3V9.5M0.4 4.9H10" stroke="#777" stroke-width="1"/><path d="M5.2 0L3.8 1.7H6.6ZM5.2 9.8L3.8 8.1H6.6ZM0 4.9L1.7 3.5V6.3ZM10.4 4.9L8.7 3.5V6.3Z" fill="#777"/></svg>
<div style="position:absolute;left:202px;top:474.65px;width:960px;height:1px;background:#ececec"></div>
<div class="t" style="left:208.90px;top:485.81px;font-size:8.2px;color:#4e4e4e;font-weight:normal;font-family:'Liberation Sans', sans-serif;">36</div>
<div class="t" style="left:236.80px;top:485.81px;font-size:8.2px;color:#4e4e4e;font-weight:normal;font-family:'Liberation Sans', sans-serif;transform:scaleX(0.9905);">22.AGO.2020</div>
<div style="position:absolute;left:362.3px;top:479.95px;width:39.8px;height:16.3px;background:#3a95da;border-radius:2px"></div>
<div class="t" style="left:366.60px;top:485.70px;font-size:8.8px;color:#fff;font-weight:normal;font-family:'Liberation Sans', sans-serif;">HAM.04</div>
<div class="t" style="left:418.50px;top:485.81px;font-size:8.2px;color:#4e4e4e;font-weight:normal;font-family:'Liberation Sans', sans-serif;">Fassona Burger</div>
<div class="t" style="left:508.50px;top:485.81px;font-size:8.2px;color:#4e4e4e;font-weight:normal;font-family:'Liberation Sans', sans-serif;transform:scaleX(0.9862);">HAMBURGER</div>
<div style="position:absolute;left:575.6px;top:483.25px;width:55.3px;height:55px;background:#fff;border:1px solid #e6e6e6;border-radius:2px"></div>
<!--IMG3:575.6,483.25-->
<div class="t" style="left:645.70px;top:486.31px;font-size:8.2px;color:#4e4e4e;font-weight:normal;font-family:'Liberation Sans', sans-serif;transform:scaleX(0.9535);">Prezzo</div>
<div class="t" style="left:645.70px;top:497.91px;font-size:8.2px;color:#4e4e4e;font-weight:normal;font-family:'Liberation Sans', sans-serif;transform:scaleX(0.9450);">Lordo</div>
<div class="t" style="left:694.10px;top:486.31px;font-size:8.2px;color:#4e4e4e;font-weight:normal;font-family:'Liberation Sans', sans-serif;transform:scaleX(1.0146);">13.00</div>
<div class="t" style="left:730.60px;top:486.31px;font-size:8.2px;color:#4e4e4e;font-weight:normal;font-family:'Liberation Sans', sans-serif;">0.00</div>
<div class="t" style="left:782.00px;top:486.31px;font-size:8.2px;color:#4e4e4e;font-weight:normal;font-family:'Liberation Sans', sans-serif;transform:scaleX(0.9817);">10% -</div>
<div class="t" style="left:831.00px;top:486.31px;font-size:8.2px;color:#4e4e4e;font-weight:normal;font-family:'Liberation Sans', sans-serif;transform:scaleX(0.9552);">R2</div>
<div class="t" style="left:870.70px;top:486.31px;font-size:8.2px;color:#4e4e4e;font-weight:normal;font-family:'Liberation Sans', sans-serif;transform:scaleX(1.0084);">S4</div>
<div style="position:absolute;left:911.9px;top:487.95px;width:40.3px;height:17.5px;background:#6556d9;border-radius:9px"></div>
<div style="position:absolute;left:912.3px;top:488.34999999999997px;width:16.6px;height:16.6px;background:#fff;border-radius:50%;border:0.6px solid #c9c3ef"></div>
<div class="t" style="left:931.10px;top:492.09px;font-size:10px;color:#fff;font-weight:bold;font-family:'Liberation Sans', sans-serif;transform:scaleX(0.9521);">Si</div>
<svg style="position:absolute;left:978.5px;top:489.75px;" width="16" height="14" viewBox="0 0 16 14"><path d="M8 13.2L1.7 7.2Q-0.7 4.2 1.6 1.6Q4.5 -0.8 8 2.6Q11.5 -0.8 14.4 1.6Q16.7 4.2 14.3 7.2Z" fill="#bbbbbb"/></svg>
<svg style="position:absolute;left:1029.5px;top:483.54999999999995px;" width="11" height="10" viewBox="0 0 11 10"><path d="M1.3 8.7L1.8 6.6L7.6 0.9L9.6 2.9L3.9 8.6Z" fill="#2f86d0"/></svg>
<svg style="position:absolute;left:1050.2px;top:484.04999999999995px;" width="13.5" height="10.5" viewBox="0 0 13.5 10.5"><path d="M1 2.3V9.3H11.2V6" stroke="#2f86d0" stroke-width="1.6" fill="none"/><path d="M3.5 7.3L4.3 5.2L9.6 0.5L11.8 2.4L6.3 7Z" fill="#2f86d0"/><path d="M1 2.3H6" stroke="#2f86d0" stroke-width="1.6"/></svg>
<svg style="position:absolute;left:1104px;top:484.04999999999995px;" width="10.5" height="10" viewBox="0 0 10.5 10"><path d="M5.2 0.3V9.5M0.4 4.9H10" stroke="#777" stroke-width="1"/><path d="M5.2 0L3.8 1.7H6.6ZM5.2 9.8L3.8 8.1H6.6ZM0 4.9L1.7 3.5V6.3ZM10.4 4.9L8.7 3.5V6.3Z" fill="#777"/></svg>
<div style="position:absolute;left:202px;top:544.3px;width:960px;height:1px;background:#ececec"></div>
<div class="t" style="left:208.90px;top:555.46px;font-size:8.2px;color:#4e4e4e;font-weight:normal;font-family:'Liberation Sans', sans-serif;">37</div>
<div class="t" style="left:236.80px;top:555.46px;font-size:8.2px;color:#4e4e4e;font-weight:normal;font-family:'Liberation Sans', sans-serif;transform:scaleX(0.9905);">22.AGO.2020</div>
<div style="position:absolute;left:362.3px;top:549.5999999999999px;width:39.8px;height:16.3px;background:#3a95da;border-radius:2px"></div>
<div class="t" style="left:366.60px;top:555.35px;font-size:8.8px;color:#fff;font-weight:normal;font-family:'Liberation Sans', sans-serif;">HAM.05</div>
<div class="t" style="left:418.50px;top:555.46px;font-size:8.2px;color:#4e4e4e;font-weight:normal;font-family:'Liberation Sans', sans-serif;">Fassona Burger</div>
<div class="t" style="left:508.50px;top:555.46px;font-size:8.2px;color:#4e4e4e;font-weight:normal;font-family:'Liberation Sans', sans-serif;transform:scaleX(0.9862);">HAMBURGER</div>
<div style="position:absolute;left:575.6px;top:552.9px;width:55.3px;height:55px;background:#fff;border:1px solid #e6e6e6;border-radius:2px"></div>
<!--IMG4:575.6,552.9-->
<div class="t" style="left:645.70px;top:555.96px;font-size:8.2px;color:#4e4e4e;font-weight:normal;font-family:'Liberation Sans', sans-serif;transform:scaleX(0.9535);">Prezzo</div>
<div class="t" style="left:645.70px;top:567.56px;font-size:8.2px;color:#4e4e4e;font-weight:normal;font-family:'Liberation Sans', sans-serif;transform:scaleX(0.9450);">Lordo</div>
<div class="t" style="left:694.10px;top:555.96px;font-size:8.2px;color:#4e4e4e;font-weight:normal;font-family:'Liberation Sans', sans-serif;transform:scaleX(1.0146);">13.00</div>
<div class="t" style="left:730.60px;top:555.96px;font-size:8.2px;color:#4e4e4e;font-weight:normal;font-family:'Liberation Sans', sans-serif;">0.00</div>
<div class="t" style="left:782.00px;top:555.96px;font-size:8.2px;color:#4e4e4e;font-weight:normal;font-family:'Liberation Sans', sans-serif;transform:scaleX(0.9817);">10% -</div>
<div class="t" style="left:831.00px;top:555.96px;font-size:8.2px;color:#4e4e4e;font-weight:normal;font-family:'Liberation Sans', sans-serif;transform:scaleX(0.9552);">R2</div>
<div class="t" style="left:870.70px;top:555.96px;font-size:8.2px;color:#4e4e4e;font-weight:normal;font-family:'Liberation Sans', sans-serif;transform:scaleX(1.0084);">S4</div>
<div style="position:absolute;left:911.9px;top:557.5999999999999px;width:40.3px;height:17.5px;background:#6556d9;border-radius:9px"></div>
<div style="position:absolute;left:912.3px;top:557.9999999999999px;width:16.6px;height:16.6px;background:#fff;border-radius:50%;border:0.6px solid #c9c3ef"></div>
<div class="t" style="left:931.10px;top:561.73px;font-size:10px;color:#fff;font-weight:bold;font-family:'Liberation Sans', sans-serif;transform:scaleX(0.9521);">Si</div>
<svg style="position:absolute;left:978.5px;top:559.4px;" width="16" height="14" viewBox="0 0 16 14"><path d="M8 13.2L1.7 7.2Q-0.7 4.2 1.6 1.6Q4.5 -0.8 8 2.6Q11.5 -0.8 14.4 1.6Q16.7 4.2 14.3 7.2Z" fill="#bbbbbb"/></svg>
<svg style="position:absolute;left:1029.5px;top:553.1999999999999px;" width="11" height="10" viewBox="0 0 11 10"><path d="M1.3 8.7L1.8 6.6L7.6 0.9L9.6 2.9L3.9 8.6Z" fill="#2f86d0"/></svg>
<svg style="position:absolute;left:1050.2px;top:553.6999999999999px;" width="13.5" height="10.5" viewBox="0 0 13.5 10.5"><path d="M1 2.3V9.3H11.2V6" stroke="#2f86d0" stroke-width="1.6" fill="none"/><path d="M3.5 7.3L4.3 5.2L9.6 0.5L11.8 2.4L6.3 7Z" fill="#2f86d0"/><path d="M1 2.3H6" stroke="#2f86d0" stroke-width="1.6"/></svg>
<svg style="position:absolute;left:1104px;top:553.6999999999999px;" width="10.5" height="10" viewBox="0 0 10.5 10"><path d="M5.2 0.3V9.5M0.4 4.9H10" stroke="#777" stroke-width="1"/><path d="M5.2 0L3.8 1.7H6.6ZM5.2 9.8L3.8 8.1H6.6ZM0 4.9L1.7 3.5V6.3ZM10.4 4.9L8.7 3.5V6.3Z" fill="#777"/></svg>
<div style="position:absolute;left:202px;top:616px;width:960px;height:2px;background:#666"></div>
<div class="t" style="left:202.00px;top:630.38px;font-size:9px;color:#333;font-weight:normal;font-family:'Liberation Sans', sans-serif;transform:scaleX(0.9895);">Stai visualizzando da 1 a 5 di 5 righe totali (filtered from 101 total entries)</div>
<div class="t" style="left:1071.00px;top:634.30px;font-size:8.5px;color:#555;font-weight:bold;font-family:'Liberation Sans', sans-serif;transform:scaleX(1.0063);">&lt;</div>
<div class="t" style="left:1106.50px;top:633.11px;font-size:10.5px;color:#3a80c0;font-weight:bold;font-family:'Liberation Sans', sans-serif;transform:scaleX(0.9412);">1</div>
<svg style="position:absolute;left:575.6px;top:274.3px" width="55" height="55" viewBox="0 0 55 55"><path d="M7 36 H36 C36 44 34 44 21.5 44 C9 44 7 44 7 36Z" fill="#e4892e"/><path d="M6.5 31 Q18.5 29 36.5 30.5 L35.5 38 Q21.5 39.5 7.5 37 Z" fill="#e02a36"/><path d="M25.1 30.5 Q36.5 29 37.0 30 L36.0 36.0 Q30.5 38 23.9 37.2Z" fill="#90c840"/><ellipse cx="17.9" cy="34.0" rx="5.1000000000000005" ry="2.08" stroke="#f6e0f0" stroke-width="1.3" fill="none"/><ellipse cx="23.3" cy="33.6" rx="4.5" ry="1.92" stroke="#f0d0e6" stroke-width="1.2" fill="none"/><rect x="7.5" y="28" width="28.0" height="3" rx="1.5" fill="#f6d070"/><rect x="7" y="22" width="29" height="7" rx="2.5" fill="#d4603c"/><path d="M6.5 23 C6.5 12.149999999999999 11.600000000000001 7.5 21.5 7.5 C31.4 7.5 36.5 12.149999999999999 36.5 23 Z" fill="#e68c36"/><ellipse cx="20.3" cy="14.01" rx="9.6" ry="4.6499999999999995" fill="#f0a44c" opacity="0.85"/><rect x="6.8" y="21.2" width="29.4" height="2.2" rx="1" fill="#f4c070"/><ellipse cx="47.0" cy="12.7" rx="6.3" ry="4.1" transform="rotate(-25 47.0 12.7)" stroke="#f2d848" stroke-width="1.2" fill="none" opacity="0.9"/><ellipse cx="45.9" cy="20.1" rx="6.3" ry="4.1" transform="rotate(-25 45.9 20.1)" stroke="#f2d848" stroke-width="1.2" fill="none" opacity="0.9"/><ellipse cx="44.9" cy="27.5" rx="6.3" ry="4.1" transform="rotate(-25 44.9 27.5)" stroke="#f2d848" stroke-width="1.2" fill="none" opacity="0.9"/><ellipse cx="43.8" cy="34.9" rx="6.3" ry="4.1" transform="rotate(-25 43.8 34.9)" stroke="#f2d848" stroke-width="1.2" fill="none" opacity="0.9"/><ellipse cx="42.8" cy="42.3" rx="6.3" ry="4.1" transform="rotate(-25 42.8 42.3)" stroke="#f2d848" stroke-width="1.2" fill="none" opacity="0.9"/></svg>
<svg style="position:absolute;left:575.6px;top:343.95000000000005px" width="55" height="55" viewBox="0 0 55 55"><path d="M6 38 H49 C49 48 47 48 27.5 48 C8 48 6 48 6 38Z" fill="#e4892e"/><path d="M4.5 29 Q22.900000000000002 27 50.5 28.5 L49.5 40 Q27.5 41.5 5.5 39 Z" fill="#e02a36"/><path d="M33.019999999999996 28.5 Q50.5 27 51.0 28 L50.0 37.0 Q41.300000000000004 40 31.18 38.8Z" fill="#90c840"/><ellipse cx="21.98" cy="34.0" rx="7.82" ry="3.12" stroke="#f6e0f0" stroke-width="1.3" fill="none"/><ellipse cx="30.26" cy="33.4" rx="6.8999999999999995" ry="2.88" stroke="#f0d0e6" stroke-width="1.2" fill="none"/><path d="M4.5 29 C4.5 12.899999999999999 12.235 6 27.25 6 C42.265 6 50 12.899999999999999 50 29 Z" fill="#e68c36"/><ellipse cx="25.43" cy="15.66" rx="14.56" ry="6.8999999999999995" fill="#f0a44c" opacity="0.85"/><rect x="4.8" y="27.2" width="44.9" height="2.2" rx="1" fill="#f4c070"/></svg>
<svg style="position:absolute;left:575.6px;top:413.6px" width="55" height="55" viewBox="0 0 55 55"><path d="M8 44 H48 C48 51 46 51 28.0 51 C10 51 8 51 8 44Z" fill="#e4892e"/><path d="M7.5 37 Q23.900000000000002 35 48.5 36.5 L47.5 46 Q28.0 47.5 8.5 45 Z" fill="#e02a36"/><path d="M32.92 36.5 Q48.5 35 49.0 36 L48.0 43.5 Q40.300000000000004 46 31.279999999999998 45.0Z" fill="#90c840"/><ellipse cx="23.08" cy="41.0" rx="6.970000000000001" ry="2.6" stroke="#f6e0f0" stroke-width="1.3" fill="none"/><ellipse cx="30.46" cy="40.5" rx="6.1499999999999995" ry="2.4" stroke="#f0d0e6" stroke-width="1.2" fill="none"/><rect x="8.5" y="32" width="39.0" height="5" rx="1.5" fill="#f2b858"/><rect x="8" y="21" width="40.5" height="12" rx="4" fill="#6b4232"/><path d="M8.5 22.5 C8.5 8.85 15.215 3 28.25 3 C41.285 3 48 8.85 48 22.5 Z" fill="#e68c36"/><ellipse cx="26.67" cy="11.19" rx="12.64" ry="5.85" fill="#f0a44c" opacity="0.85"/><rect x="8.8" y="20.7" width="38.9" height="2.2" rx="1" fill="#f4c070"/></svg>
<svg style="position:absolute;left:575.6px;top:483.25px" width="55" height="55" viewBox="0 0 55 55"><path d="M8 44 H47 C47 53 45 53 27.5 53 C10 53 8 53 8 44Z" fill="#e4892e"/><path d="M7.5 37 Q23.7 35 48 36.5 L47 46 Q27.75 47.5 8.5 45 Z" fill="#e02a36"/><path d="M32.61 36.5 Q48 35 48.5 36 L47.5 43.5 Q39.9 46 30.99 45.0Z" fill="#90c840"/><ellipse cx="22.89" cy="41.0" rx="6.885000000000001" ry="2.6" stroke="#f6e0f0" stroke-width="1.3" fill="none"/><ellipse cx="30.180000000000003" cy="40.5" rx="6.075" ry="2.4" stroke="#f0d0e6" stroke-width="1.2" fill="none"/><rect x="8.5" y="32" width="38.5" height="5" rx="1.5" fill="#f2b858"/><rect x="7.5" y="20" width="41.0" height="13" rx="4" fill="#5a3428"/><path d="M8.5 21.5 C8.5 7.85 15.13 2 28.0 2 C40.87 2 47.5 7.85 47.5 21.5 Z" fill="#e68c36"/><ellipse cx="26.44" cy="10.19" rx="12.48" ry="5.85" fill="#f0a44c" opacity="0.85"/><rect x="8.8" y="19.7" width="38.4" height="2.2" rx="1" fill="#f4c070"/></svg>
<svg style="position:absolute;left:575.6px;top:552.9px" width="55" height="55" viewBox="0 0 55 55"><ellipse cx="9.3" cy="14.8" rx="3.4" ry="3.1" transform="rotate(-25 9.3 14.8)" stroke="#88c040" stroke-width="1.2" fill="none" opacity="0.9"/><ellipse cx="8.8" cy="20.4" rx="3.4" ry="3.1" transform="rotate(-25 8.8 20.4)" stroke="#88c040" stroke-width="1.2" fill="none" opacity="0.9"/><ellipse cx="8.2" cy="26.0" rx="3.4" ry="3.1" transform="rotate(-25 8.2 26.0)" stroke="#88c040" stroke-width="1.2" fill="none" opacity="0.9"/><ellipse cx="7.6" cy="31.6" rx="3.4" ry="3.1" transform="rotate(-25 7.6 31.6)" stroke="#88c040" stroke-width="1.2" fill="none" opacity="0.9"/><ellipse cx="7.1" cy="37.2" rx="3.4" ry="3.1" transform="rotate(-25 7.1 37.2)" stroke="#88c040" stroke-width="1.2" fill="none" opacity="0.9"/><ellipse cx="49.0" cy="14.8" rx="3.8" ry="3.1" transform="rotate(-25 49.0 14.8)" stroke="#f4d640" stroke-width="1.2" fill="none" opacity="0.9"/><ellipse cx="48.4" cy="20.4" rx="3.8" ry="3.1" transform="rotate(-25 48.4 20.4)" stroke="#f4d640" stroke-width="1.2" fill="none" opacity="0.9"/><ellipse cx="47.7" cy="26.0" rx="3.8" ry="3.1" transform="rotate(-25 47.7 26.0)" stroke="#f4d640" stroke-width="1.2" fill="none" opacity="0.9"/><ellipse cx="47.1" cy="31.6" rx="3.8" ry="3.1" transform="rotate(-25 47.1 31.6)" stroke="#f4d640" stroke-width="1.2" fill="none" opacity="0.9"/><ellipse cx="46.5" cy="37.2" rx="3.8" ry="3.1" transform="rotate(-25 46.5 37.2)" stroke="#f4d640" stroke-width="1.2" fill="none" opacity="0.9"/><path d="M12.5 34 H41 C41 41 39 41 26.75 41 C14.5 41 12.5 41 12.5 34Z" fill="#e4892e"/><path d="M12 29 Q23.8 27 41.5 28.5 L40.5 37 Q26.75 38.5 13 36 Z" fill="#e02a36"/><path d="M30.29 28.5 Q41.5 27 42.0 28 L41.0 34.75 Q35.6 37 29.11 36.1Z" fill="#90c840"/><ellipse cx="23.21" cy="32.5" rx="5.015000000000001" ry="2.34" stroke="#f6e0f0" stroke-width="1.3" fill="none"/><ellipse cx="28.520000000000003" cy="32.05" rx="4.425" ry="2.16" stroke="#f0d0e6" stroke-width="1.2" fill="none"/><rect x="12.5" y="22" width="28.5" height="6" rx="2" fill="#f2a848"/><path d="M12.5 23 C12.5 13.9 17.345 10 26.75 10 C36.155 10 41 13.9 41 23 Z" fill="#e68c36"/><ellipse cx="25.61" cy="15.46" rx="9.120000000000001" ry="3.9" fill="#f0a44c" opacity="0.85"/><rect x="12.8" y="21.2" width="27.9" height="2.2" rx="1" fill="#f4c070"/></svg>
<div style="position:absolute;left:961px;top:430px;width:222px;height:192px;background:#fff;border-radius:5px;box-shadow:0 3px 30px 4px rgba(0,0,0,0.58);overflow:hidden"><div style="position:absolute;left:0;top:0;width:222px;height:53.6px;background:linear-gradient(90deg,#1640d8 0%,#2860da 50%,#4a90dc 100%)"></div><div style="position:absolute;left:216px;top:53.6px;width:1px;height:86px;background:#eee"></div><div style="position:absolute;left:0;top:138.4px;width:222px;height:2px;background:#4466cc"></div></div>
<svg style="position:absolute;left:975.5px;top:445.5px;" width="41" height="26" viewBox="0 0 41 26"><circle cx="29.5" cy="12.5" r="10.6" fill="#fff"/><path d="M22 18Q21 13 26 13Q28 9 32 11Q36 10 37 15Q39 16 38 19Z" fill="#3aa0dc"/><path d="M23 18Q22 14 24.5 13Q23.5 16 24.5 18Z" fill="#e8205a"/><path d="M27 6L27.8 8.5M31 5L30.5 8M34.5 7L33 9" stroke="#e8c020" stroke-width="0.9"/><circle cx="12.5" cy="12.5" r="12.2" fill="#dde"/><circle cx="12.5" cy="12.5" r="11.6" fill="#4c5a3a"/><path d="M2 8Q4 2 9 3L6 12Z" fill="#6a7a48"/><ellipse cx="12.8" cy="13.5" rx="5" ry="6.5" fill="#b07a58"/><path d="M7 10Q7 4 12.8 4.2Q18.5 4 18.6 10Q17 7 12.8 7.5Q8.5 7 7 10Z" fill="#2a1e14"/><path d="M7.8 14Q8.5 21 12.8 21Q17 21 17.8 14Q16 18.5 12.8 18.5Q9.5 18.5 7.8 14Z" fill="#4a3424"/><path d="M4 24Q12.5 18 21 24Z" fill="#2a3a50"/></svg>
<div class="t" style="left:1022.70px;top:448.19px;font-size:11px;color:#fff;font-weight:normal;font-family:'Liberation Sans', sans-serif;">Assistenza Clienti</div>
<div style="position:absolute;left:1024px;top:462px;width:5.4px;height:5.4px;background:#3ad048;border-radius:50%"></div>
<div class="t" style="left:1033.00px;top:461.21px;font-size:7.2px;color:#a8c4f0;font-weight:normal;font-family:'Liberation Sans', sans-serif;transform:scaleX(1.0350);">Rispondiamo immediata...</div>
<svg style="position:absolute;left:1132.5px;top:449px;" width="5" height="10" viewBox="0 0 5 10"><circle cx="2.4" cy="1.3" r="1.1" fill="#fff"/><circle cx="2.4" cy="4.6" r="1.1" fill="#fff"/><circle cx="2.4" cy="7.9" r="1.1" fill="#fff"/></svg>
<svg style="position:absolute;left:1154px;top:449px;" width="11" height="11" viewBox="0 0 11 11"><path d="M1 1L9.8 9.8M9.8 1L1 9.8" stroke="#fff" stroke-width="1.5"/></svg>
<div style="position:absolute;left:1134.2px;top:499.2px;width:36.8px;height:28.2px;background:linear-gradient(135deg,#1a4ad8,#3a80e0);border-radius:6px"></div>
<div class="t" style="left:1142.70px;top:508.50px;font-size:9.8px;color:#fff;font-weight:normal;font-family:'Liberation Sans', sans-serif;transform:scaleX(0.9823);">Help</div>
<div class="t" style="left:1148.60px;top:531.59px;font-size:5.8px;color:#bbb;font-weight:normal;font-family:'Liberation Sans', sans-serif;transform:scaleX(1.1082);">1 ora fa</div>
<div class="t" style="left:971.30px;top:581.90px;font-size:9.8px;color:#222;font-weight:normal;font-family:'Liberation Sans', sans-serif;transform:scaleX(0.9526);">Help</div>
<svg style="position:absolute;left:993px;top:581px;" width="10" height="10" viewBox="0 0 10 10"><path d="M1 4.5H3V9.5H1Z" fill="#e8a030"/><path d="M3.5 4.5L5.5 0.8Q7 0.8 6.6 3.5H9Q9.8 3.8 9.4 5L8.5 9.3Q8.2 9.8 7.5 9.8H3.5Z" fill="#f5b840"/></svg>
<div style="position:absolute;left:1003.8px;top:580.5px;width:0.8px;height:12px;background:#666"></div>
<svg style="position:absolute;left:1129.5px;top:577px;" width="17" height="17" viewBox="0 0 17 17"><circle cx="8.3" cy="8.2" r="7.2" stroke="#bbb" stroke-width="1" fill="none"/><circle cx="5.8" cy="6.5" r="0.8" fill="#bbb"/><circle cx="10.8" cy="6.5" r="0.8" fill="#bbb"/><path d="M5 10Q8.3 12.8 11.6 10" stroke="#bbb" stroke-width="1" fill="none"/></svg>
<svg style="position:absolute;left:1153px;top:577.5px;" width="15" height="15" viewBox="0 0 15 15"><path d="M0.5 0.3L14.5 7.3L0.5 14.3L3 7.3Z" fill="#1a40d8"/><path d="M3 7.3H8" stroke="#fff" stroke-width="0.9"/></svg>
<svg style="position:absolute;left:1022px;top:604px;" width="17" height="12" viewBox="0 0 17 12"><path d="M2 11Q0 7 4 5Q3 8 4.5 11Z" fill="#e8205a"/><path d="M4 11Q3 7 7 5Q5.5 8 6.5 11Z" fill="#f5d020"/><path d="M6 11Q5 6 10 6.5Q14 4.5 15.5 8.5Q17 10 15.5 11Z" fill="#27a4dc"/><path d="M6 1L6.5 3.5M10 0.8L9.5 3.2" stroke="#d04080" stroke-width="0.8"/></svg>
<div class="t" style="left:1040.50px;top:609.04px;font-size:7.4px;color:#c8c8c8;font-weight:normal;font-family:'Liberation Sans', sans-serif;">Powered</div>
<div style="position:absolute;left:1125px;top:623.8px;width:42px;height:41.5px;background:linear-gradient(135deg,#1a48c0,#3a7ed2);border-radius:50%"></div>
<svg style="position:absolute;left:1134px;top:633px;" width="24" height="22" viewBox="0 0 24 22"><path d="M12 2C6 2 2 5.5 2 9.5C2 12 3.5 14 6 15.3L5 19L9.5 16.6C10.3 16.8 11.1 16.9 12 16.9C18 16.9 22 13.4 22 9.5C22 5.5 18 2 12 2Z" fill="#fff"/></svg>
<div style="position:absolute;left:1155.3px;top:654.5px;width:10.4px;height:10.4px;background:#30c040;border-radius:50%;border:1.2px solid #fff"></div>
</body></html>
